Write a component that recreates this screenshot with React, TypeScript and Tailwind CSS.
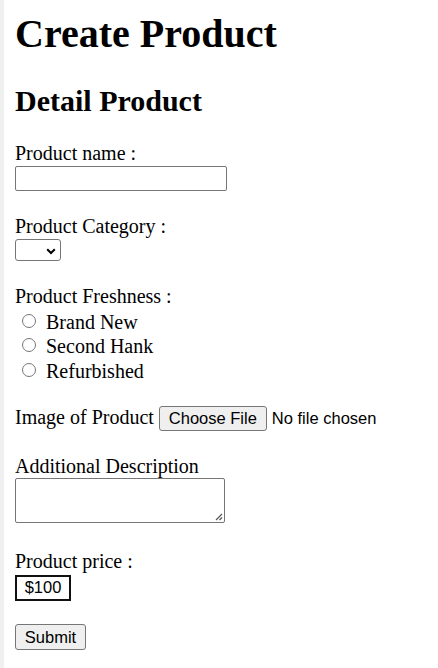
import type { FormEvent } from 'react';

const label = 'block text-[20px] leading-[23px]';
const sans = "font-['Liberation_Sans',Arial,sans-serif]";

function Radio({ id, text, first }: { id: string; text: string; first?: boolean }) {
  return (
    <label htmlFor={id} className={`flex items-start text-[20px] leading-[24.5px] ${first ? 'mt-[2px]' : ''}`}>
      <input
        id={id}
        type="radio"
        name="freshness"
        className="appearance-none ml-[7px] mr-[10px] mt-[4px] w-[14px] h-[14px] rounded-full border border-[#767676] bg-white"
      />
      <span>{text}</span>
    </label>
  );
}

export default function App() {
  const submit = (e: FormEvent) => e.preventDefault();

  return (
    <div className="min-h-screen bg-white border-l-4 border-[#f0f0f0] pl-[11px] font-['Liberation_Serif',serif] text-black">
      <h1 className="pt-[10.5px] text-[40px] leading-[46px] font-bold">Create Product</h1>
      <h2 className="mt-[26px] text-[30px] leading-[35px] font-bold">Detail Product</h2>

      <form onSubmit={submit} className="flex flex-col items-start">
        <label htmlFor="name" className={`${label} mt-[24.4px]`}>Product name :</label>
        <input
          id="name"
          type="text"
          className="mt-[1.25px] w-[212px] h-[25px] border border-[#767676] rounded-[2px] bg-white"
        />

        <label htmlFor="cat" className={`${label} mt-[23.75px]`}>Product Category :</label>
        <div className="relative mt-[1.25px]">
          <select
            id="cat"
            className="appearance-none block w-[46px] h-[22px] border border-[#767676] rounded-[3px] bg-white"
          />
          <svg className="pointer-events-none absolute left-[31px] top-[8.5px]" width="10" height="7" viewBox="0 0 10 7">
            <path d="M1.2 1.2l3.8 3.8 3.8-3.8" fill="none" stroke="#000" strokeWidth="2" />
          </svg>
        </div>

        <div className={`${label} mt-[23.5px]`}>Product Freshness :</div>
        <Radio id="new" text="Brand New" first />
        <Radio id="second" text="Second Hank" />
        <Radio id="refurb" text="Refurbished" />

        <div className="mt-[23px] flex items-baseline text-[20px] leading-[23px]">
          <span>Image of Product</span>
          <label className={`ml-[5px] ${sans} text-[16.5px] flex items-baseline`}>
            <span className="inline-flex items-center justify-center w-[108px] h-[25px] bg-[#efefef] border border-[#767676] rounded-[3px] leading-[19px]">
              Choose File
            </span>
            <span className="ml-[5px]">No file chosen</span>
            <input type="file" className="hidden" />
          </label>
        </div>

        <label htmlFor="desc" className={`${label} mt-[23.5px]`}>Additional Description</label>
        <div className="relative mt-[0.8px]">
          <textarea
            id="desc"
            className="block resize-none w-[210px] h-[45px] border border-[#767676] rounded-[2px] bg-white"
          />
          <svg className="pointer-events-none absolute right-[2px] bottom-[2px]" width="9" height="9" viewBox="0 0 9 9">
            <path d="M8 2L2 8M8 5.5L5.5 8" stroke="#555" strokeWidth="1.2" />
          </svg>
        </div>

        <label htmlFor="price" className={`${label} mt-[26.5px]`}>Product price :</label>
        <input
          id="price"
          type="text"
          defaultValue="$100"
          className={`mt-[2px] w-[56px] h-[26px] border-2 border-[#111] bg-white text-center ${sans} text-[16.5px]`}
        />

        <button
          type="submit"
          className={`mt-[23.5px] w-[71px] h-[26px] bg-[#efefef] border border-[#767676] rounded-[3px] ${sans} text-[16.5px] leading-[19px]`}
        >
          Submit
        </button>
      </form>
    </div>
  );
}
